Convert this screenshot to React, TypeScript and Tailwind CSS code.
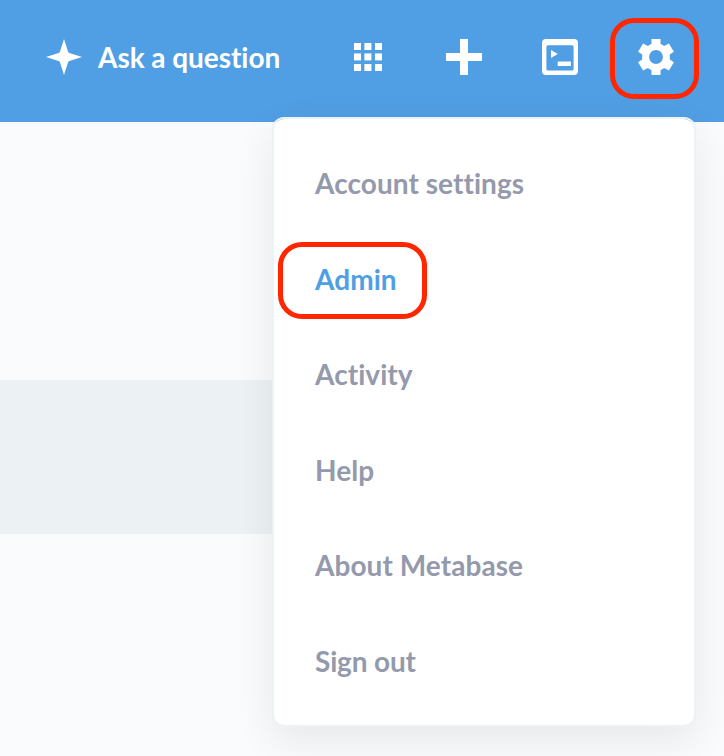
const items = ["Account settings", "Admin", "Activity", "Help", "About Metabase", "Sign out"];

function StarIcon() {
  return (
    <svg className="h-9 w-9 shrink-0" viewBox="0 0 36 36" fill="white">
      <path d="M18 0L22 12.6Q22.3 13.7 23.4 14L36 18L23.4 22Q22.3 22.3 22 23.4L18 36L14 23.4Q13.7 22.3 12.6 22L0 18L12.6 14Q13.700 13.700 14 12.600Z" />
    </svg>
  );
}

function GridIcon() {
  return (
    <svg className="h-7 w-7" viewBox="0 0 28 28" fill="white">
      {[0, 10.4, 21].map((y) =>
        [0, 10.4, 21].map((x) => <rect key={`${x}-${y}`} x={x} y={y} width="7" height="7" />)
      )}
    </svg>
  );
}

function PlusIcon() {
  return (
    <svg className="h-9 w-9" viewBox="0 0 36 36" fill="white">
      <path d="M14 0h8v14h14v8H22v14h-8V22H0v-8h14z" />
    </svg>
  );
}

function ConsoleIcon() {
  return (
    <svg className="h-9 w-9" viewBox="0 0 36 36" fill="white">
      <path
        fillRule="evenodd"
        d="M4 0H32a4 4 0 0 1 4 4V32a4 4 0 0 1-4 4H4a4 4 0 0 1-4-4V4a4 4 0 0 1 4-4ZM6 6.2a1.6 1.6 0 0 0-1.6 1.6V30a1.6 1.6 0 0 0 1.6 1.6H30a1.6 1.6 0 0 0 1.6-1.6V7.8a1.6 1.6 0 0 0-1.6-1.6Z"
      />
      <path d="M9 11l6.8 4-6.8 4zM15.7 22.5h13.2v4.6H15.7z" />
    </svg>
  );
}

function GearIcon() {
  return (
    <svg className="h-9 w-9" viewBox="-18 -18 36 36" fill="white">
      <path
        fillRule="evenodd"
        d="M-4.5 -18H4.5V-13.3L8.2 -11.1L12.9 -13.6L17.9 -5.2L13.8 -2.5V2.5L17.9 5.2L12.9 13.6L8.2 11.1L4.5 13.3V18H-4.5V13.3L-8.2 11.1L-12.9 13.6L-17.9 5.2L-13.8 2.5V-2.5L-17.9 -5.2L-12.9 -13.6L-8.2 -11.1L-4.5 -13.3ZM0 -6.9A6.9 6.9 0 1 0 0 6.9A6.9 6.9 0 1 0 0 -6.9Z"
      />
    </svg>
  );
}

export default function App() {
  return (
    <div className="relative h-[756px] w-[724px] overflow-hidden bg-[#f9fbfc] font-['Lato',sans-serif] text-[28px] leading-[34px] font-bold [font-variant-ligatures:none]">
      <header className="flex h-[122px] items-start bg-[#509ee3] pt-[39px] pl-[46px] text-white">
        <div className="flex h-9 w-[308px] items-center gap-4">
          <StarIcon />
          <span className="whitespace-nowrap tracking-[-0.05px]">Ask a question</span>
        </div>
        <div className="flex h-9 w-[92px] items-start pt-1"><GridIcon /></div>
        <div className="w-24"><PlusIcon /></div>
        <div className="w-24"><ConsoleIcon /></div>
        <div className="relative">
          <GearIcon />
          <div className="absolute -top-[21px] -left-7 h-[81px] w-[89px] rounded-[24px] border-[5px] border-[#ff2600]" />
        </div>
      </header>
      <div className="mt-[258px] h-[154px] w-[272px] bg-[#ecf2f4]" />
      <nav className="absolute top-[117px] left-[272px] flex h-[610px] w-[424px] flex-col rounded-xl border-2 border-[#edf2f5] bg-white bg-clip-padding pt-[18px] shadow-[0_14px_40px_rgba(0,0,0,0.08)]">
        {items.map((item) => (
          <div
            key={item}
            className={`relative flex h-[95.6px] shrink-0 items-center pl-[41px] ${item === "Admin" ? "text-[#509ee3]" : "text-[#949aab]"}`}
          >
            <span className={item === "Sign out" ? "pb-[3px] tracking-[-0.15px]" : "pb-[3.4px] tracking-[0.06px]"}>{item}</span>
            {item === "Admin" && (
              <div className="absolute top-[9.4px] left-1 h-[77px] w-[149px] rounded-[24px] border-[5px] border-[#ff2600]" />
            )}
          </div>
        ))}
      </nav>
    </div>
  );
}
